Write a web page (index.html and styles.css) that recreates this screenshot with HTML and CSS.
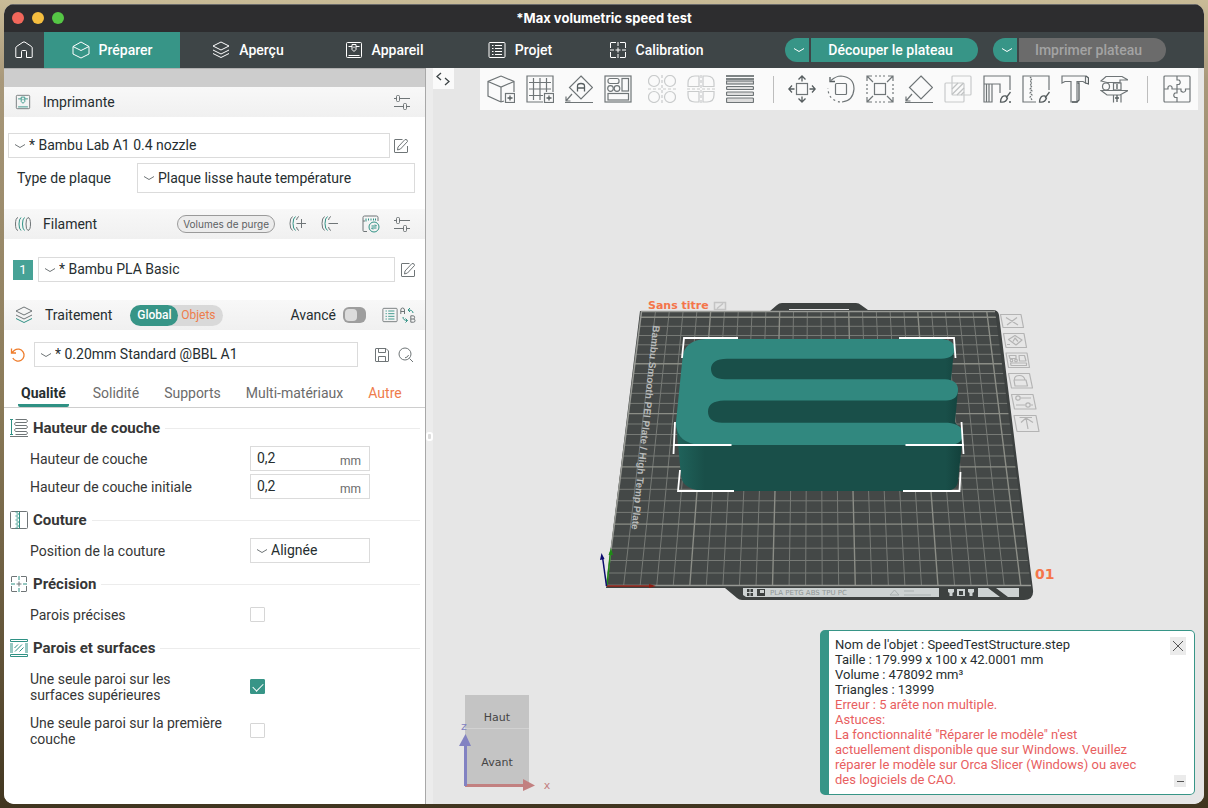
FILE: index.html
```html
<!DOCTYPE html>
<html lang="fr">
<head>
    <meta charset="UTF-8">
    <title>Max volumetric speed test</title>
    <link rel="stylesheet" href="styles.css">
</head>
<body>
<svg class="symbols" aria-hidden="true">
    <symbol id="chevron" viewBox="0 0 12 6"><path d="M1 1.500 Q3.500 3 6 4.500 Q8.500 3 11 1.500"/></symbol>
    <symbol id="cube" viewBox="0 0 18 18"><path d="M9 1 L17 5.500 V13 L9 17 L1 13 V5.500 Z M1 5.500 L9 9.500 L17 5.500"/></symbol>
    <symbol id="layers" viewBox="0 0 18 18"><path d="M9 1 L17 5 L9 9 L1 5 Z M1 9 L9 13 L17 9"/><path class="accent" d="M1 12.500 L9 16.500 L17 12.500"/></symbol>
    <symbol id="printer" viewBox="0 0 18 18"><rect x="1.500" y="1.500" width="15" height="15" rx="1"/><path class="accent" d="M3.500 14.500 H14.500 M3.500 5.500 H7 M11 5.500 H14.500 M7 3.500 H11 V8.500 L9 10.500 L7 8.500 Z M9 5.500 V7"/></symbol>
    <symbol id="list" viewBox="0 0 18 18"><rect x="1" y="1.500" width="16" height="15" rx="1"/><path class="accent" d="M4 4.500 H5.500 M7 4.500 H14 M4 7.500 H5.500 M7 7.500 H14 M4 10.500 H5.500 M7 10.500 H14 M4 13.500 H5.500 M7 13.500 H14"/></symbol>
    <symbol id="target" viewBox="0 0 18 18"><path d="M7 1.500 H2 Q1.500 1.500 1.500 2 V7 M11 1.500 H16 Q16.500 1.500 16.500 2 V7 M1.500 11 V16 Q1.500 16.500 2 16.500 H7 M16.500 11 V16 Q16.500 16.500 16 16.500 H11 M6.500 9 H11.500 M9 6.500 V11.500"/><path class="accent" d="M9 1 V5 M9 13 V17 M1 9 H5 M13 9 H17"/></symbol>
    <symbol id="sliders" viewBox="0 0 16 16"><path d="M0 4.500 H2.500 M5.500 4.500 H16 M0 12.500 H9.500 M12.500 12.500 H16"/><rect x="2.500" y="1.500" width="3" height="6" rx="1"/><rect x="9.500" y="9.500" width="3" height="6" rx="1"/></symbol>
    <symbol id="edit" viewBox="0 0 16 16"><path d="M9.500 1.500 H2 Q1.500 1.500 1.500 2 V14 Q1.500 14.500 2 14.500 H14 Q14.500 14.500 14.500 14 V8 M4.500 12 L5 9 L12 1.500 Q14.500 1 14.500 3.500 L7.500 11 Z"/></symbol>
</svg>

<div class="window">
    <header class="titlebar">
        <div class="lights">
            <span class="light red"></span>
            <span class="light yellow"></span>
            <span class="light green"></span>
        </div>
        <h1 class="title">*Max volumetric speed test</h1>
    </header>

    <nav class="topnav">
        <button class="home" aria-label="Accueil">
            <svg class="icon18" viewBox="0 0 18 18"><path d="M.8 7 Q.8 6 1.500 5.500 L8 1.200 Q9 .6 10 1.200 L16.500 5.500 Q17.200 6 17.200 7 V16 Q17.200 16.500 16.500 16.500 H11.500 V10.500 Q11.500 9.500 10.500 9.500 H7.500 Q6.500 9.500 6.500 10.500 V16.500 H1.500 Q.8 16.500 .8 16 Z"/></svg>
        </button>
        <button class="navtab active"><svg class="icon18"><use href="#cube"/></svg>Préparer</button>
        <button class="navtab"><svg class="icon18"><use href="#layers"/></svg>Aperçu</button>
        <button class="navtab"><svg class="icon18"><use href="#printer"/></svg>Appareil</button>
        <button class="navtab"><svg class="icon18"><use href="#list"/></svg>Projet</button>
        <button class="navtab"><svg class="icon18"><use href="#target"/></svg>Calibration</button>
        <div class="actions">
            <div class="split">
                <button class="split-arrow" aria-label="Options de découpe"><svg class="chev"><use href="#chevron"/></svg></button>
                <button class="split-main slice">Découper le plateau</button>
            </div>
            <div class="split">
                <button class="split-arrow" aria-label="Options d'impression"><svg class="chev"><use href="#chevron"/></svg></button>
                <button class="split-main print" disabled>Imprimer plateau</button>
            </div>
        </div>
    </nav>

    <main class="main">
        <aside class="sidebar">
            <div class="side-top"></div>

            <div class="side-head">
                <svg class="icon16 two"><use href="#printer"/></svg>
                <h2>Imprimante</h2>
                <button class="icon-btn push" aria-label="Réglages imprimante"><svg class="icon16"><use href="#sliders"/></svg></button>
            </div>
            <div class="printer-body">
                <div class="row">
                    <div class="combo grow">
                        <svg class="chev"><use href="#chevron"/></svg>
                        <select aria-label="Imprimante"><option>* Bambu Lab A1 0.4 nozzle</option></select>
                    </div>
                    <button class="icon-btn" aria-label="Modifier l'imprimante"><svg class="icon16"><use href="#edit"/></svg></button>
                </div>
                <div class="row plate-row">
                    <label class="plate-label" for="plate">Type de plaque</label>
                    <div class="combo tall grow">
                        <svg class="chev"><use href="#chevron"/></svg>
                        <select id="plate"><option>Plaque lisse haute température</option></select>
                    </div>
                </div>
            </div>

            <div class="side-head">
                <svg class="icon16" viewBox="0 0 16 16"><path d="M3 1.500 Q.5 2 .5 8 Q.5 14 3 14.500 M13 1.500 Q15.500 2 15.500 8 Q15.500 14 13 14.500 Q11 14 11 8 Q11 2 13 1.500"/><path class="teal" d="M6 1.500 Q4 3 4 8 Q4 13 6 14.500 M9.500 1.500 Q7.500 3 7.500 8 Q7.500 13 9.500 14.500"/></svg>
                <h2>Filament</h2>
                <button class="purge push">Volumes de purge</button>
                <button class="icon-btn" aria-label="Ajouter un filament">
                    <svg class="icon18" viewBox="0 0 18 18"><path d="M3.500 1.500 Q1 3 1 8.500 Q1 14 3.500 15.500 M10 1.500 Q8 2 7.500 5 M7.500 12 Q8 15 10 15.500 M7.500 8.500 H17 M12.500 4 V13"/><path class="teal" d="M6.500 1.500 Q4 3 4 8.500 Q4 14 6.500 15.500"/></svg>
                </button>
                <button class="icon-btn" aria-label="Retirer un filament">
                    <svg class="icon18" viewBox="0 0 18 18"><path d="M3.500 1.500 Q1 3 1 8.500 Q1 14 3.500 15.500 M10 1.500 Q8 2 7.500 5 M7.500 12 Q8 15 10 15.500 M7.500 8.500 H17"/><path class="teal" d="M6.500 1.500 Q4 3 4 8.500 Q4 14 6.500 15.500"/></svg>
                </button>
                <button class="icon-btn ams" aria-label="Synchroniser l'AMS">
                    <svg class="icon18" viewBox="0 0 18 18"><path d="M5 16.500 H2 Q1 16.500 1 15.500 V2.500 Q1 1 2.500 1 H14.500 Q16 1 16 2.500 V6 M1 6 H3"/><path class="teal" d="M4 3.500 V6.500 M6.500 3.500 V5.500 M9 3.500 V5.500 M11.500 3.500 V5.500 M13.500 3.500 V5.500"/><circle class="teal" cx="12" cy="12" r="5"/><path class="teal" d="M9.500 11 H14.500 L13 9.500 M14.500 13 H9.500 L11 14.500"/></svg>
                </button>
                <button class="icon-btn" aria-label="Réglages filament"><svg class="icon16"><use href="#sliders"/></svg></button>
            </div>
            <div class="filament-body row">
                <span class="swatch">1</span>
                <div class="combo grow">
                    <svg class="chev"><use href="#chevron"/></svg>
                    <select aria-label="Filament 1"><option>* Bambu PLA Basic</option></select>
                </div>
                <button class="icon-btn" aria-label="Modifier le filament"><svg class="icon16"><use href="#edit"/></svg></button>
            </div>

            <div class="side-head process-head">
                <svg class="icon18 two"><use href="#layers"/></svg>
                <h2>Traitement</h2>
                <div class="scope">
                    <button class="scope-on">Global</button>
                    <button class="scope-off">Objets</button>
                </div>
                <label class="advanced push" for="advanced">Avancé</label>
                <input type="checkbox" class="switch" id="advanced">
                <button class="icon-btn list-btn" aria-label="Liste des paramètres"><svg class="icon16 two"><use href="#list"/></svg></button>
                <button class="icon-btn" aria-label="Comparer les préréglages">
                    <svg class="icon16" viewBox="0 0 16 16"><path d="M.8 7 V3 Q.8 1 2.500 1 Q4.500 1 4.500 3 V7 M.8 4.500 H4.500 M10.800 8.800 V15.200 H13.500 Q15 15.200 15 13.700 Q15 12 13.500 12 H10.800 M13.500 12 Q14.600 12 14.600 10.400 Q14.600 8.800 13.200 8.800 H10.800"/><path class="teal" d="M13 6 Q13 3 8 3 M10 1 L8 3 L10 5 M3 10 Q3 13.500 7.500 13.500 M5.500 11.500 L7.500 13.500 L5.500 15.500"/></svg>
                </button>
            </div>
            <div class="process-body row">
                <button class="icon-btn undo" aria-label="Réinitialiser">
                    <svg class="icon16" viewBox="0 0 16 16"><path d="M1.500 1.500 V6 H6 M1.700 5.800 L4.500 3.300 A6 6 0 1 1 2.800 11"/></svg>
                </button>
                <div class="combo grow">
                    <svg class="chev"><use href="#chevron"/></svg>
                    <select aria-label="Traitement"><option>* 0.20mm Standard @BBL A1</option></select>
                </div>
                <button class="icon-btn" aria-label="Enregistrer">
                    <svg class="icon16" viewBox="0 0 16 16"><path d="M2 1.500 H12 L14.500 4 V14 Q14.500 14.500 14 14.500 H2 Q1.500 14.500 1.500 14 V2 Q1.500 1.500 2 1.500 Z M4.500 1.500 V5.500 H11.500 V1.500 M4.500 14.500 V9.500 H11.500 V14.500"/></svg>
                </button>
                <button class="icon-btn" aria-label="Rechercher">
                    <svg class="icon16" viewBox="0 0 16 16"><circle cx="7" cy="7" r="6"/><path d="M11.500 11.500 L15 15 M7 10.800 Q9.800 10.500 10.600 8"/></svg>
                </button>
            </div>

            <div class="tabs">
                <button class="tab active">Qualité</button>
                <button class="tab">Solidité</button>
                <button class="tab">Supports</button>
                <button class="tab">Multi-matériaux</button>
                <button class="tab modified">Autre</button>
            </div>

            <div class="settings">
                <section class="group">
                    <h3><svg class="icon18" viewBox="0 0 18 18"><path d="M0 17.500 H18"/><path d="M5.500 .5 H16.500 L17.500 2 L16.500 3.500 H5.500 L4.500 5 L5.500 6.500 H16.500 L17.500 8 L16.500 9.500 H5.500 L4.500 11 L5.500 12.500 H16.500 L17.500 14 L16.500 15.500 H5.500"/><path class="teal" d="M1.500 1 V15 M0 .5 H3 M0 15.500 H3"/></svg>Hauteur de couche</h3>
                    <div class="setting">
                        <label for="layer-height">Hauteur de couche</label>
                        <span class="field"><input type="text" id="layer-height" value="0,2"><span class="unit">mm</span></span>
                    </div>
                    <div class="setting">
                        <label for="first-layer-height">Hauteur de couche initiale</label>
                        <span class="field"><input type="text" id="first-layer-height" value="0,2"><span class="unit">mm</span></span>
                    </div>
                </section>
                <section class="group">
                    <h3><svg class="icon18" viewBox="0 0 18 18"><rect x=".5" y=".5" width="17" height="17" rx="1"/><path class="teal" d="M5.500 1 H8 M6.500 3 H9 M5.500 5 H8 M6.500 7 H9 M5.500 9 H8 M6.500 11 H9 M5.500 13 H8 M6.500 15 H9 M5.500 17 H8 M9.500 1 V17"/></svg>Couture</h3>
                    <div class="setting">
                        <label for="seam">Position de la couture</label>
                        <div class="combo field">
                            <svg class="chev"><use href="#chevron"/></svg>
                            <select id="seam"><option>Alignée</option></select>
                        </div>
                    </div>
                </section>
                <section class="group">
                    <h3><svg class="icon18 two"><use href="#target"/></svg>Précision</h3>
                    <div class="setting">
                        <label for="precise-wall">Parois précises</label>
                        <input type="checkbox" class="check" id="precise-wall">
                    </div>
                </section>
                <section class="group">
                    <h3><svg class="icon18" viewBox="0 0 18 18"><path class="teal" d="M.5 .5 H17.500 V2.500 H.5 Z M.5 15.500 H17.500 V17.500 H.5 Z M4.500 9 L8 5.500 M5 12.500 L12 5.500 M9.500 12.500 L13.500 8.500 M0 5 H3 M0 7 H3 M0 9 H3 M0 11 H3 M0 13 H3 M15 5 H18 M15 7 H18 M15 9 H18 M15 11 H18 M15 13 H18"/></svg>Parois et surfaces</h3>
                    <div class="setting two-lines">
                        <label for="one-wall-top">Une seule paroi sur les surfaces supérieures</label>
                        <input type="checkbox" class="check" id="one-wall-top" checked>
                    </div>
                    <div class="setting two-lines">
                        <label for="one-wall-first">Une seule paroi sur la première couche</label>
                        <input type="checkbox" class="check" id="one-wall-first">
                    </div>
                </section>
            </div>
        </aside>

        <div class="sash"><span class="sash-grip"></span></div>

        <div class="canvas">
            <svg class="scene" viewBox="433 68 771 736" role="img" aria-label="Plateau 01">
                <defs>
                    <clipPath id="bed"><path d="M641 311 H995 L1031 586 H606 Z"/></clipPath>
                    <linearGradient id="side" x1="0" x2="1" y1="0" y2="0">
                        <stop offset="0" stop-color="#20645c"/>
                        <stop offset=".1" stop-color="#194f49"/>
                        <stop offset=".94" stop-color="#194f49"/>
                        <stop offset="1" stop-color="#123f3a"/>
                    </linearGradient>
                </defs>

                <!-- build plate -->
                <path fill="#3d4140" d="M640 311 H770 L777 305 Q779 303 782 303 H856 Q859 303 861 305 L868 310 H993 Q998 310 999 315 L1033 590 Q1034 600 1024 600 H742 Q739 600 737 598 L725 588 H606 Z"/>
                <path fill="#444847" d="M641 311 H995 L1031 586 H606 Z"/>
                <path fill="none" stroke="#e6e6e6" d="M789 309.500 H849"/>
                <g clip-path="url(#bed)" fill="none" stroke="#777a76">
                    <path d="M600 573H1040 M600 560.500H1040 M600 548.200H1040 M600 536.100H1040 M600 512.400H1040 M600 500.800H1040 M600 489.300H1040 M600 478.100H1040 M600 456H1040 M600 445.200H1040 M600 434.500H1040 M600 424H1040 M600 403.400H1040 M600 393.300H1040 M600 383.300H1040 M600 373.500H1040 M600 354.300H1040 M600 344.800H1040 M600 335.500H1040 M600 326.300H1040"/>
                    <path d="M623.600 586L655.500 311 M640.100 586L669.300 311 M656.700 586L683.100 311 M673.200 586L696.900 311 M706.300 586L724.500 311 M722.900 586L738.300 311 M739.400 586L752.100 311 M756 586L765.900 311 M789.100 586L793.500 311 M805.600 586L807.300 311 M822.200 586L821.100 311 M838.700 586L834.900 311 M871.800 586L862.500 311 M888.400 586L876.300 311 M904.900 586L890.100 311 M921.500 586L903.900 311 M954.600 586L931.500 311 M971.100 586L945.300 311 M987.700 586L959.100 311 M1004.200 586L972.900 311"/>
                    <path stroke="#8b8d86" stroke-width="1.400" d="M600 524.100H1040 M600 466.900H1040 M600 413.600H1040 M600 363.800H1040 M600 317.200H1040 M689.800 586L710.700 311 M772.500 586L779.700 311 M855.300 586L848.700 311 M938 586L917.700 311 M1020.800 586L986.700 311"/>
                </g>
                <path fill="none" stroke="#979994" stroke-width="1.500" d="M995 311.500 H641.500 L606.500 585.500 H1031"/>

                <!-- front label of the plate -->
                <path fill="#cdd2d2" d="M743 588 H939 V597 H746 L743 595 Z M978 588 H1019 V597 H978 Z"/>
                <path fill="#3d4140" d="M988 588 H996 L1008 597 H1000 Z M747 589 h2.500 v3 h-2.500 Z M750.500 589 h2.500 v3 h-2.500 Z M747 593 h2.500 v3 h-2.500 Z M750.500 593 h2.500 v3 h-2.500 Z M757 589 h8 v7 h-8 Z"/>
                <path fill="#cdd2d2" d="M760 590 h4 v3 h-4 Z M948 589 h6 v3 l-1.500 1 v3 h-3 v-3 L948 592 Z M957 589 h8 v7 h-8 Z M968 589 h6 v3 l-1.500 1 v3 h-3 v-3 L968 592 Z"/>
                <path fill="#3d4140" d="M959 591 h4 v4 h-4 Z"/>
                <text class="plate-small" x="770" y="595">PLA PETG ABS TPU PC</text>
                <path fill="none" stroke="#a9b0b0" d="M890 595 L894.500 590 L899 595 Z M904 591 H914 M904 595 H931"/>
                <text class="plate-side" transform="translate(653 325) rotate(96)">Bambu Smooth PEI Plate / High Temp Plate</text>

                <!-- test model -->
                <path fill="url(#side)" d="M676 422 L681 476 Q683 491 708 491 H944 Q957 491 958 481 L963 434 L955 422 L958 390 L951 381 L954 349 L700 345 Z"/>
                <path fill="#31887f" fill-rule="evenodd" d="M706 339 H942 Q954.500 340 954.500 349 Q954.500 358.500 941 358.700 H727 Q711 359 711 369 Q711 379 725 379.300 H945 Q958 380 958 390 Q958 400 946 400.500 H724 Q708 401 708 411.500 Q708 422.500 722 422.700 H948 Q962.500 424 963 434 Q963 444 950 445 H702 Q676 444 676 422 L682.500 358 Q684 340 706 339 Z"/>
                <path fill="none" stroke="#fff" stroke-width="1.800" d="M738 338 H684 L682 358 M899 338 H954 L955.500 358 M675 422 L673.500 454 M673 445 H731.500 M905.500 445 H964 M961.500 422 L963.500 454 M680 470 L678 491 H734 M903 491 H959.500 L960.500 472"/>

                <!-- origin axes -->
                <path fill="none" stroke="#1f8b16" stroke-width="1.500" d="M607 585 L610.500 552"/>
                <path fill="#1f8b16" d="M608.500 555 L611 548 L613 555 Z"/>
                <path fill="none" stroke="#8f1c12" stroke-width="1.500" d="M607 586 H650"/>
                <path fill="#8f1c12" d="M649 584 L656 586 L649 588 Z"/>
                <path fill="none" stroke="#0c0c6e" stroke-width="1.500" d="M606.500 586 L602.500 557"/>
                <path fill="#0c0c6e" d="M600 560 L601.500 553 L604.500 559 Z"/>

                <text class="plate-name" x="648" y="309">Sans titre</text>
                <path fill="none" stroke="#c4c4c4" stroke-width="1.500" d="M714.500 302.500 H725.500 V309.500 H714.500 Z M717 308.500 L723 303.500"/>
                <text class="plate-number" x="1035" y="579">01</text>

                <!-- plate tools, seen in perspective -->
                <g fill="none" stroke="#b4b4b4" stroke-width="1.200" stroke-linejoin="round">
                    <path d="M1000.500 314.500 H1021 L1023.500 327.500 H1003 Z M1006 317.500 L1018 325 M1017 317.500 L1007 325"/>
                    <path d="M1003.500 333.500 H1024 L1026.500 347.500 H1006 Z M1008.500 339.500 L1015 335.500 L1022 340 L1016 345 Z M1013 341.500 L1015 338 L1018 341.500 M1007 344.500 H1010"/>
                    <path d="M1006 353 H1027 L1029.500 367.500 H1008.500 Z M1009 355.500 H1016 V358.500 H1010 Z M1019 355.500 H1024.500 L1026 361 H1019.500 Z M1010.500 363 H1026.500 V365.500 H1011 Z"/>
                    <circle cx="1011.500" cy="360.500" r="1.300"/>
                    <circle cx="1016" cy="360.500" r="1.300"/>
                    <path d="M1008.500 373.500 H1029.500 L1032.500 388 H1011.500 Z M1014 380 H1026 L1027.500 386 H1015 Z M1014.500 380 Q1014 375.500 1019.500 375.500 Q1024 375.500 1025 380"/>
                    <path d="M1011.500 394.500 H1033 L1036 409 H1014.500 Z M1020.500 398 H1031 M1016 405 H1025 M1031 405 H1033"/>
                    <circle cx="1018" cy="398" r="2.200"/>
                    <circle cx="1028" cy="405" r="2.200"/>
                    <path d="M1014 415.500 H1036 L1039 431.500 H1017 Z M1019.500 417.500 H1032 M1026 418 L1028 429 M1021 422.500 L1026 418 L1033 422.500"/>
                </g>
            </svg>

            <button class="collapse" aria-label="Replier le panneau"><svg viewBox="0 0 16 16"><path d="M6 2 L2 5.500 L6 9 M10 7 L14 10.500 L10 14"/></svg></button>

            <div class="toolbar">
                <button aria-label="Ajouter"><svg viewBox="0 0 28 28"><path d="M14 1 L27 6.500 V17 M14 27 L1 21 V6.500 L14 1 M1 6.500 L14 12 L27 6.500 M14 12 V27 M14 27 L17 26"/><rect x="18.500" y="18.500" width="9" height="9"/><path class="bold" d="M20.500 23 H25.500 M23 20.500 V25.500"/></svg></button>
                <button aria-label="Ajouter un plateau"><svg viewBox="0 0 28 28"><path d="M17 27 H1 V1 H27 V17 M7.500 3 V25 M14 3 V25 M20.500 3 V17 M3 7.500 H25 M3 14 H25 M3 20.500 H17"/><rect x="18.500" y="18.500" width="9" height="9"/><path class="bold" d="M20.500 23 H25.500 M23 20.500 V25.500"/></svg></button>
                <button aria-label="Orientation automatique"><svg viewBox="0 0 28 28"><path d="M16 1 L27.500 12.500 L16 24 L4.500 12.500 Z M0 27.500 H28 M7 19 L1 26 M1 21.500 V26 H5.500"/><path class="bold" d="M12.500 16.500 V11 Q12.500 8.500 16 8.500 Q19.500 8.500 19.500 11 V16.500 M12.500 13 H19.500"/></svg></button>
                <button aria-label="Arranger"><svg viewBox="0 0 28 28"><rect x="1" y="1" width="26" height="26"/><rect x="4" y="3.500" width="11" height="5" rx="2"/><rect x="18" y="3.500" width="6.500" height="12.500"/><rect x="4" y="18.500" width="20.500" height="6.500"/><circle cx="6.500" cy="13.500" r="2.800"/><circle cx="13" cy="13.500" r="2.800"/></svg></button>
                <button class="spaced" disabled aria-label="Séparer en objets"><svg viewBox="0 0 28 28"><circle cx="6" cy="6" r="5.500"/><circle cx="22" cy="6" r="5.500"/><circle cx="6" cy="22" r="5.500"/><circle cx="22" cy="22" r="5.500"/><path stroke-dasharray="3 2" d="M14 0 V28 M0 14 H28"/></svg></button>
                <button disabled aria-label="Séparer en pièces"><svg viewBox="0 0 28 28"><path d="M12 1 V11.500 H1 V8 Q1 1 8 1 Z M16 1 V11.500 H27 V8 Q27 1 20 1 Z M12 27 V16.500 H1 V20 Q1 27 8 27 Z M16 27 V16.500 H27 V20 Q27 27 20 27 Z"/><path stroke-dasharray="3 2" d="M14 0 V28 M0 14 H28"/></svg></button>
                <button aria-label="Hauteur de couche variable"><svg viewBox="0 0 28 28"><path class="bold" d="M0 1 H28 M0 4 H28"/><g fill="#ddd"><rect x=".5" y="6" width="27" height="3"/><rect x=".5" y="11.500" width="27" height="3" rx="1"/><rect x=".5" y="17" width="27" height="3.500" rx="1"/><rect x=".5" y="23" width="27" height="4.500" rx="1"/></g></svg></button>
                <span class="sep"></span>
                <button aria-label="Déplacer"><svg viewBox="0 0 28 28"><rect x="8.500" y="8.500" width="11" height="11"/><path class="bold" d="M14 6.500 V1.500 M10.500 4.500 L14 1 L17.500 4.500 M14 21.500 V26.500 M10.500 23.500 L14 27 L17.500 23.500 M6.500 14 H1 M4 10.500 L.8 14 L4 17.500 M21.500 14 H27 M24 10.500 L27.200 14 L24 17.500"/></svg></button>
                <button aria-label="Pivoter"><svg viewBox="0 0 28 28"><rect x="8.500" y="8.500" width="11" height="11" rx="1"/><path d="M4 5.500 Q9 1 14 1 Q27 2 27 14 Q26 26 15 27"/><path stroke-dasharray="2 3" d="M13 27 Q1 25 1 13"/><path class="bold" d="M3 2 V6.500 H8"/></svg></button>
                <button aria-label="Redimensionner"><svg viewBox="0 0 28 28"><rect x="8.500" y="8.500" width="11" height="11"/><path stroke-dasharray="2 2" d="M9 1 H20 M9 27 H20 M1 9 V20 M27 9 V20"/><path d="M1 6 V1 H6 M1 1 L7 7 M22 1 H27 V6 M27 1 L21 7 M1 22 V27 H6 M1 27 L7 21 M22 27 H27 V22 M27 27 L21 21"/></svg></button>
                <button aria-label="Poser sur une face"><svg viewBox="0 0 28 28"><path d="M16 1 L27.500 12.500 L16 24 L4.500 12.500 Z M0 27.500 H28 M7 19 L1 26 M1 21.500 V26 H5.500"/></svg></button>
                <button disabled aria-label="Opération booléenne"><svg viewBox="0 0 28 28"><rect x="1" y="8" width="19" height="19" rx="1"/><rect x="8" y="1" width="19" height="19" rx="1"/><path class="bold" d="M8 14 L14 8 M8 19.500 L19.500 8 M13 20 L20 13 M17 20 L20 17"/></svg></button>
                <button aria-label="Peindre les supports"><svg viewBox="0 0 28 28"><path d="M27 15 V1 H1 V27 H9 V9 H17 V18 M1 9 H17 M3.500 9 V27 M6 9 V27"/><path class="bold" d="M27.500 17 L23 23 M23 21 Q18 20 17.500 27 Q23 28 24.500 23 Z M26 27 H28"/></svg></button>
                <button aria-label="Peindre la couture"><svg viewBox="0 0 28 28"><path d="M14 27 H1 V1 H27 V15"/><path stroke-dasharray="2 1" d="M8 2 L10 4 L8 6 L10 8 L8 10 L10 12 L8 14 L10 16 L8 18 L10 20 L8 22 L10 25"/><path class="bold" d="M27.500 17 L23 23 M23 21 Q18 20 17.500 27 Q23 28 24.500 23 Z M26 27 H28"/></svg></button>
                <button aria-label="Texte en relief"><svg viewBox="0 0 28 28"><path d="M1 1 H24.500 V8 L22 6.500 H16 V27 H10 V6.500 H4 L1 8 Z"/><path class="bold" d="M25 1 L27.500 3 V9 L24.500 8 M16.500 8 H18 V25 L16 27 H11"/></svg></button>
                <button aria-label="Mesurer"><svg viewBox="0 0 28 28"><path d="M1 6 L6 1.500 H22 L28 5 H20 V7.500 H7 Z M1 15.500 H28 L20 20 H7 Z"/><circle cx="6" cy="11.500" r="3.500"/><rect x="13.500" y="8" width="7.500" height="7"/><path d="M13.500 20 V27.500 M21 20 V27.500"/><path class="bold" d="M15 23 H19 M17 20 V27 M17 9 V14"/></svg></button>
                <span class="sep wide"></span>
                <button aria-label="Vue d'assemblage"><svg viewBox="0 0 28 28"><rect x="1" y="1" width="26" height="26" rx="1"/><path d="M14 1 V5 H16 Q18.500 7 16 9.500 H14 V14 M1 14 H5 V12 Q7 9.500 9 12 V14 H18 V16 Q20.500 18.500 22.500 16 V14 H27 M14 14 V18 H12 Q9.500 20 12 22.500 H14 V27"/></svg></button>
            </div>

            <svg class="navcube" viewBox="0 0 100 104">
                <rect x="7" y="1" width="64" height="91" fill="#c4c4c4"/>
                <path stroke="#d2d2d2" d="M7 34.500 H71"/>
                <text class="face" x="39" y="27">Haut</text>
                <text class="face" x="39" y="72">Avant</text>
                <path fill="none" stroke="#c28080" stroke-width="3" d="M7 91.500 H66"/>
                <path fill="#c28080" d="M65 85 L77 91.500 L65 97 Z"/>
                <path fill="none" stroke="#8282c2" stroke-width="3" d="M7.500 92 V50"/>
                <path fill="#8282c2" d="M1 52 L7.500 40 L13 52 Z"/>
                <text class="axis-z" x="6" y="36">z</text>
                <text class="axis-x" x="89" y="95">x</text>
            </svg>

            <div class="notice">
                <div class="notice-text">
                    <p>Nom de l'objet : SpeedTestStructure.step</p>
                    <p>Taille : 179.999 x 100 x 42.0001 mm</p>
                    <p>Volume : 478092 mm³</p>
                    <p>Triangles : 13999</p>
                    <p class="error">Erreur : 5 arête non multiple.</p>
                    <p class="error">Astuces:</p>
                    <p class="error">La fonctionnalité "Réparer le modèle" n'est actuellement disponible que sur Windows. Veuillez réparer le modèle sur Orca Slicer (Windows) ou avec des logiciels de CAO.</p>
                </div>
                <div class="notice-buttons">
                    <button class="notice-close" aria-label="Fermer"><svg viewBox="0 0 16 18"><path d="M3 4 L13 14 M13 4 L3 14"/></svg></button>
                    <button class="notice-min" aria-label="Réduire"><svg viewBox="0 0 12 12"><path d="M3 6.500 H10"/></svg></button>
                </div>
            </div>
        </div>
    </main>
</div>
</body>
</html>
```

FILE: styles.css
```css
* {
    box-sizing: border-box;
}

body {
    margin: 0;
    padding: 4px;
    height: 100vh;
    background: linear-gradient(#c9bb97, #a8987a 10%, #8a7a58 50%, #5c4e34 85%, #40351f);
    font-family: Roboto, "Open Sans", sans-serif;
    font-size: 14px;
    color: #262e30;
}

h1, h2, h3, p {
    margin: 0;
}

button, input, select {
    font: inherit;
    color: inherit;
    border: 0;
    padding: 0;
    margin: 0;
    background: none;
}

svg {
    display: block;
    flex: none;
}

.symbols {
    display: none;
}

.accent {
    stroke: var(--accent);
}

.window {
    display: flex;
    flex-direction: column;
    height: 100%;
    border-radius: 10px;
    overflow: hidden;
    background: #fff;
}

/* title bar */

.titlebar {
    display: grid;
    grid-template-columns: 1fr auto 1fr;
    align-items: center;
    height: 28px;
    flex: none;
    padding-bottom: 2px;
    background: #2d2d2f;
    border-top: 1px solid #6b6b6b;
}

.lights {
    display: flex;
    gap: 8px;
    padding-left: 8px;
}

.light {
    width: 12px;
    height: 12px;
    border-radius: 50%;
}

.red {
    background: #f1675b;
}

.yellow {
    background: #f5be3f;
}

.green {
    background: #55c645;
}

.title {
    font-family: Inter, sans-serif;
    font-size: 13px;
    font-weight: 700;
    line-height: 16px;
    color: #fff;
}

/* main navigation */

.topnav {
    --accent: #fff;
    display: flex;
    height: 36px;
    flex: none;
    background: #3e4547;
    color: #fff;
}

.topnav svg {
    fill: none;
    stroke: #fff;
}

.icon16 {
    width: 16px;
    height: 16px;
}

.icon18 {
    width: 18px;
    height: 18px;
}

.chev {
    width: 12px;
    height: 6px;
    fill: none;
    stroke: #6b7072;
}

.home {
    display: flex;
    align-items: center;
    justify-content: center;
    width: 40px;
}

.navtab {
    display: flex;
    align-items: center;
    justify-content: center;
    gap: 9px;
    width: 136px;
    font-weight: 500;
}

.navtab.active {
    background: #379587;
}

.actions {
    display: flex;
    align-items: center;
    gap: 15px;
    margin-left: auto;
    padding-right: 38px;
}

.split {
    display: flex;
    gap: 2px;
    height: 24px;
}

.split-arrow {
    display: flex;
    align-items: center;
    justify-content: center;
    width: 24px;
    padding-left: 4px;
    border-radius: 12px 0 0 12px;
    background: #379587;
}

.split-main {
    padding: 0 23px 0 15px;
    border-radius: 0 12px 12px 0;
    font-weight: 500;
}

.slice {
    width: 167px;
    background: #379587;
}

.print {
    width: 147px;
    background: #6b6b6b;
    color: #a3a3a3;
}

/* sidebar */

.main {
    display: grid;
    grid-template-columns: 422px 7px minmax(0, 1fr);
    flex: 1;
    min-height: 0;
}

.sidebar {
    border-right: 1px solid #a8a8a8;
    background: #fff;
    overflow: hidden;
}

.side-top {
    height: 19px;
    background: #cdcdcd;
    border-top: 1px solid #b0b0b0;
}

.side-head {
    display: flex;
    align-items: center;
    height: 30px;
    padding: 0 15px 0 11px;
    background: linear-gradient(#f8f8f8, #f0f0f0);
}

.side-head h2 {
    margin-left: 12px;
    font-size: 14px;
    font-weight: 400;
}

.sidebar svg {
    fill: none;
    stroke: #6f7577;
}

.sidebar .teal {
    stroke: #2f9184;
}

.two {
    --accent: #2f9184;
}

.push {
    margin-left: auto;
}

.icon-btn {
    display: flex;
}

.row {
    display: flex;
    align-items: center;
}

.grow {
    flex: 1;
}

.combo {
    display: flex;
    align-items: center;
    height: 25px;
    padding-left: 5px;
    border: 1px solid #dbdbdb;
    background: #fff;
}

.combo select {
    appearance: none;
    flex: 1;
    min-width: 0;
    padding: 0 0 2px 3px;
}

.combo.tall {
    height: 30px;
}

.combo.tall select {
    padding-bottom: 0;
}

.printer-body {
    display: flex;
    flex-direction: column;
    gap: 5px;
    padding: 16px 16px 16px 4px;
}

.printer-body .icon-btn {
    margin-left: 3px;
}

.plate-row {
    padding-left: 9px;
    margin-right: -6px;
}

.plate-label {
    width: 120px;
}

.purge {
    height: 18px;
    margin-right: 14px;
    padding: 0 5px;
    border: 1px solid #9a9a9a;
    border-radius: 9px;
    background: #ececec;
    font-family: Inter, sans-serif;
    font-size: 10px;
    color: #5c6163;
}

.side-head .icon-btn + .icon-btn {
    margin-left: 14px;
}

.side-head .ams.icon-btn {
    margin-left: 23px;
}

.filament-body {
    padding: 18px 9px 18px 9px;
    gap: 5px;
}

.swatch {
    width: 20px;
    height: 20px;
    line-height: 20px;
    background: #46a296;
    color: #fff;
    font-size: 13px;
    text-align: center;
}

.scope {
    display: flex;
    height: 21px;
    margin-left: 18px;
    border-radius: 11px;
    background: #d9d9d9;
    font-size: 12px;
}

.scope-on {
    width: 48px;
    border-radius: 11px;
    background: #379587;
    color: #fff;
    font-weight: 500;
}

.scope-off {
    width: 45px;
    padding-right: 5px;
    color: #ee7c4b;
}

.switch {
    appearance: none;
    width: 23px;
    height: 16px;
    margin: 0 16px 0 7px;
    border-radius: 6px;
    background: #9e9e9e;
}

.switch::before {
    content: "";
    display: block;
    width: 12px;
    height: 12px;
    margin: 2px;
    border-radius: 4px;
    background: #dcdcdc;
}

.side-head .list-btn + .icon-btn {
    margin-left: 2px;
}

.process-head {
    padding-right: 9px;
}

.process-body {
    gap: 8px;
    padding: 12px 11px 0 6px;
}

.process-body .combo {
    margin-right: 8px;
}

.sidebar .undo svg {
    stroke: #ee7c2b;
    stroke-width: 1.3;
}

.tabs {
    display: flex;
    gap: 23px;
    height: 41px;
    padding: 11px 14px 0;
    border-bottom: 1px solid #cecece;
    color: #6b6b6b;
}

.tab {
    border-bottom: 3px solid transparent;
    padding: 4px 1px 0;
}

.tab.active {
    border-color: #2f9184;
    border-radius: 2px;
    padding: 4px 3px 0;
    color: #262e30;
    font-weight: 700;
}

.tab.modified {
    color: #ee7c4b;
}

.settings {
    padding: 11px 5px 0 6px;
}

.group {
    display: flex;
    flex-direction: column;
    gap: 3px;
    padding-bottom: 12px;
}

.group h3 {
    display: flex;
    align-items: center;
    gap: 5px;
    height: 18px;
    margin-bottom: 6px;
    font-size: 15px;
    font-weight: 700;
    color: #363636;
}

.group h3::after {
    content: "";
    flex: 1;
    height: 1px;
    background: #ececec;
}

.setting {
    display: flex;
    align-items: center;
    min-height: 25px;
    padding-left: 20px;
    line-height: 16px;
    color: #363636;
}

.setting label {
    width: 220px;
    padding-right: 24px;
}

.two-lines {
    min-height: 41px;
}

.field {
    width: 120px;
    height: 25px;
    display: flex;
    align-items: center;
    border: 1px solid #dbdbdb;
    color: #262e30;
}

.field input {
    flex: 1;
    min-width: 0;
    padding: 0 0 2px 6px;
}

.unit {
    padding: 4px 8px 0 0;
    font-size: 12px;
    color: #6b6b6b;
}

.check {
    appearance: none;
    display: flex;
    justify-content: center;
    width: 15px;
    height: 15px;
    border: 1px solid #d6d6d6;
    border-radius: 1px;
}

.check:checked {
    border-color: #379587;
    background: #379587;
}

.check:checked::before {
    content: "";
    width: 9px;
    height: 5px;
    margin-top: 3px;
    border: solid #fff;
    border-width: 0 0 1px 1px;
    transform: rotate(-45deg);
}

/* 3D view */

.sash {
    display: flex;
    align-items: center;
    background: #ececec;
}

.sash-grip {
    width: 7px;
    height: 9px;
    border: 2px solid #fff;
    border-radius: 3px;
    background: #dcdcdc;
}

.canvas {
    display: grid;
    grid-template-columns: auto 1fr auto;
    grid-template-rows: auto 1fr auto;
    min-height: 0;
    background: #e6e6e6;
}

.scene {
    grid-area: 1 / 1 / 4 / 4;
    width: 100%;
    height: 100%;
    min-height: 0;
}

.plate-side {
    font-family: "Liberation Sans", sans-serif;
    font-size: 10px;
    font-weight: 700;
    fill: #b9bbba;
}

.plate-small {
    font-family: "DejaVu Sans", sans-serif;
    font-size: 7px;
    fill: #8f9696;
}

.plate-name {
    font-family: "DejaVu Sans", sans-serif;
    font-size: 11px;
    font-weight: 700;
    fill: #f4754a;
}

.plate-number {
    font-family: "DejaVu Sans", sans-serif;
    font-size: 14px;
    font-weight: 700;
    fill: #f4754a;
}

.collapse {
    grid-area: 1 / 1;
    align-self: start;
    width: 21px;
    height: 21px;
    padding: 0 2px;
    background: #fafafa;
}

.collapse svg {
    width: 16px;
    height: 16px;
    fill: none;
    stroke: #3e4547;
    stroke-width: 1.3;
}

.toolbar {
    grid-area: 1 / 1 / 2 / 4;
    justify-self: end;
    display: flex;
    align-items: center;
    gap: 11px;
    height: 42px;
    margin-right: 6px;
    padding: 0 7px;
    background: #fafafa;
}

.toolbar svg {
    width: 28px;
    height: 28px;
    fill: none;
    stroke: #6f7577;
    stroke-width: 1.2;
}

.toolbar .bold {
    stroke: #565d5f;
    stroke-width: 1.3;
}

.toolbar button:disabled {
    opacity: .35;
}

.spaced {
    margin-left: 5px;
}

.sep {
    width: 1px;
    height: 27px;
    margin: 0 3px 0 8px;
    background: #bdbdbd;
}

.sep.wide {
    margin-right: 4px;
}

.navcube {
    grid-area: 3 / 1 / 4 / 3;
    align-self: end;
    justify-self: start;
    width: 100px;
    height: 104px;
    margin: 0 0 6px 25px;
}

.face {
    font-family: "DejaVu Sans", sans-serif;
    font-size: 11px;
    text-anchor: middle;
    fill: #444;
}

.axis-z, .axis-x {
    font-family: "DejaVu Sans", sans-serif;
    font-size: 11px;
    text-anchor: middle;
    fill: #8282c2;
}

.axis-x {
    fill: #c28080;
}

.notice {
    grid-area: 3 / 2 / 4 / 4;
    justify-self: end;
    display: flex;
    justify-content: space-between;
    width: 375px;
    margin: 0 9px 9px 0;
    padding: 6px 8px 7px 6px;
    border: 1px solid #379587;
    border-left-width: 9px;
    border-radius: 5px;
    background: #fff;
    font-size: 13px;
    line-height: 15px;
}

.notice-text {
    width: 312px;
}

.error {
    color: #e8605f;
}

.notice-buttons {
    display: flex;
    flex-direction: column;
    justify-content: space-between;
    align-items: flex-end;
}

.notice-close, .notice-min {
    background: #ebebeb;
}

.notice-close svg {
    width: 16px;
    height: 18px;
}

.notice-min svg {
    width: 12px;
    height: 12px;
}

.notice-buttons svg {
    fill: none;
    stroke: #555;
}
```
